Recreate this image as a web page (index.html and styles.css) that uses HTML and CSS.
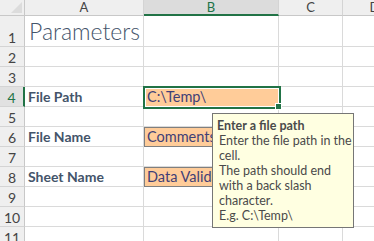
FILE: index.html
```html
<!DOCTYPE html>
<html>
<head>
<meta charset="utf-8">
<link rel="stylesheet" href="styles.css">
</head>
<body>
<div class="sheet">
  <div class="corner"><span class="tri"></span></div>
  <div class="ch">A</div>
  <div class="ch ch-sel">B</div>
  <div class="ch">C</div>
  <div class="ch">D</div>

  <div class="rh">1</div>
  <div class="cell title">Parameters</div>
  <div class="cell"></div>
  <div class="cell"></div>
  <div class="cell"></div>

  <div class="rh">2</div>
  <div class="cell"></div><div class="cell"></div><div class="cell"></div><div class="cell"></div>

  <div class="rh">3</div>
  <div class="cell"></div><div class="cell"></div><div class="cell"></div><div class="cell"></div>

  <div class="rh rh-sel">4</div>
  <div class="cell label">File Path</div>
  <div class="cell input selected">C:\Temp\</div>
  <div class="cell"></div>
  <div class="cell"></div>

  <div class="rh">5</div>
  <div class="cell"></div><div class="cell"></div><div class="cell"></div><div class="cell"></div>

  <div class="rh">6</div>
  <div class="cell label">File Name</div>
  <div class="cell input">Comments</div>
  <div class="cell"></div>
  <div class="cell"></div>

  <div class="rh">7</div>
  <div class="cell"></div><div class="cell"></div><div class="cell"></div><div class="cell"></div>

  <div class="rh">8</div>
  <div class="cell label">Sheet Name</div>
  <div class="cell input">Data Validation</div>
  <div class="cell"></div>
  <div class="cell"></div>

  <div class="rh">9</div>
  <div class="cell"></div><div class="cell"></div><div class="cell"></div><div class="cell"></div>

  <div class="rh">10</div>
  <div class="cell"></div><div class="cell"></div><div class="cell"></div><div class="cell"></div>

  <div class="rh">11</div>
  <div class="cell"></div><div class="cell"></div><div class="cell"></div><div class="cell"></div>
</div>

<div class="tip">
  <div class="tip-title">Enter a file path</div>
  <div class="tip-line">Enter the file path in the</div>
  <div class="tip-line">cell.</div>
  <div class="tip-line">The path should end</div>
  <div class="tip-line">with a back slash</div>
  <div class="tip-line">character.</div>
  <div class="tip-line">E.g. C:\Temp\</div>
</div>
</body>
</html>
```

FILE: styles.css
```css
html, body {
  margin: 0;
  padding: 0;
  background: #ffffff;
  overflow: hidden;
}

body {
  width: 374px;
  height: 241px;
  position: relative;
  font-family: Lato, "Liberation Sans", sans-serif;
}

.sheet {
  display: grid;
  grid-template-columns: 25px 119px 135px 64px 64px;
  grid-template-rows: 16px 31px repeat(10, 20px);
}

.corner {
  background: #efefef;
  border-right: 1px solid #c8c8c8;
  border-bottom: 1px solid #c8c8c8;
  box-sizing: border-box;
  position: relative;
}

.tri {
  position: absolute;
  right: 2px;
  bottom: 2px;
  width: 11px;
  height: 11px;
  background: #dcdcdc;
  clip-path: polygon(100% 0, 100% 100%, 0 100%);
}

.ch {
  box-sizing: border-box;
  background: #efefef;
  border-right: 1px solid #d4d4d4;
  border-bottom: 1px solid #c8c8c8;
  display: flex;
  align-items: center;
  justify-content: center;
  font-size: 13px;
  color: #444444;
  line-height: 1;
}

.ch-sel {
  background: #dcdcdc;
  color: #217346;
  border-bottom: 2px solid #217346;
}

.rh {
  box-sizing: border-box;
  background: #efefef;
  border-right: 1px solid #c8c8c8;
  border-bottom: 1px solid #d4d4d4;
  display: flex;
  align-items: flex-end;
  justify-content: center;
  padding-bottom: 1px;
  font-size: 14px;
  color: #444444;
  line-height: 1;
}

.rh-sel {
  background: #e1e1e1;
  color: #217346;
  border-right: 2px solid #217346;
}

.cell {
  box-sizing: border-box;
  border-right: 1px solid #dadada;
  border-bottom: 1px solid #dadada;
  display: flex;
  align-items: flex-end;
  padding: 0 3px 2px 3px;
  font-size: 14.5px;
  line-height: 1;
  white-space: nowrap;
  overflow: hidden;
  color: #44546a;
}

.title {
  font-size: 23px;
  font-weight: 300;
  padding-left: 4px;
  padding-bottom: 3px;
  color: #44546a;
  overflow: visible;
}

.label {
  font-weight: bold;
  font-size: 14px;
  color: #44546a;
}

.input {
  background: #ffcc99;
  border: 1px solid #7f7f7f;
  color: #3f3f76;
  padding-left: 2px;
}

.selected {
  position: relative;
  overflow: visible;
}

.selected::after {
  content: "";
  position: absolute;
  left: -2px;
  top: -2px;
  right: -3px;
  bottom: -3px;
  border: 2px solid #217346;
  box-shadow: inset 0 0 0 1px #ffffff;
}

.selected::before {
  content: "";
  position: absolute;
  right: -4px;
  bottom: -4px;
  width: 5px;
  height: 5px;
  background: #217346;
  border: 1px solid #ffffff;
  z-index: 2;
}

.tip {
  position: absolute;
  left: 212px;
  top: 113px;
  width: 142px;
  height: 115px;
  box-sizing: border-box;
  background: #ffffe1;
  border: 1px solid #767676;
  padding: 4px 0 0 4px;
  color: #4a4a4a;
  font-size: 12.5px;
  line-height: 15px;
  white-space: nowrap;
  z-index: 5;
}

.tip-title {
  font-weight: bold;
}

.tip-line {
  padding-left: 2px;
}
```
